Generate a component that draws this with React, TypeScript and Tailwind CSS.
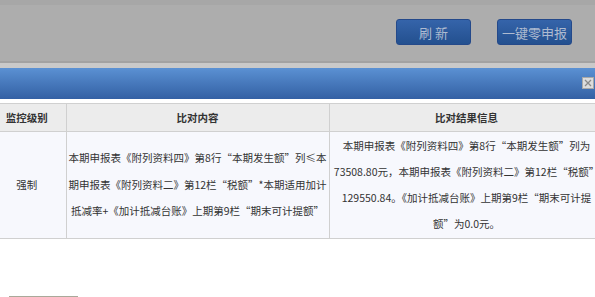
import React from "react";

const font = { fontFamily: '"Noto Sans CJK SC", "Noto Sans", sans-serif' };

export default function App() {
  return (
    <div className="w-[595px] h-[297px] overflow-hidden bg-white relative" style={font}>
      {/* top gray bar */}
      <div className="h-[5px] bg-[#a7a7a7]" />
      <div className="h-[56px] bg-[#adadad] flex items-start justify-end pt-[14px] pr-[23px] gap-[26px]">
        <button className="w-[75px] h-[26px] rounded-[3px] border border-[#24498a] bg-gradient-to-b from-[#3564aa] to-[#23508f] text-[13px] text-[#aebbd0] flex items-center justify-center leading-none">
          刷&nbsp;新
        </button>
        <button className="w-[75px] h-[26px] rounded-[3px] border border-[#24498a] bg-gradient-to-b from-[#3564aa] to-[#23508f] text-[13px] text-[#aebbd0] flex items-center justify-center leading-none whitespace-nowrap">
          一键零申报
        </button>
      </div>
      <div className="h-[2px] bg-[#a2a2a2]" />
      <div className="h-[5px] bg-[#c9c9c9]" />
      {/* blue dialog header */}
      <div className="h-[31px] bg-gradient-to-b from-[#5b91d3] to-[#3360a4] flex items-start justify-end pt-[9px] pr-[1px]">
        <div className="w-[12px] h-[12px] bg-[#dcdcdc] border border-[#a8a8a8] flex items-center justify-center">
          <svg width="8" height="8" viewBox="0 0 8 8">
            <path d="M1 1L7 7M7 1L1 7" stroke="#8a8a8a" strokeWidth="1.3" />
          </svg>
        </div>
      </div>
      <div className="h-[4px] bg-white" />
      {/* table */}
      <div className="overflow-hidden">
        <table className="ml-[-12px] border-collapse table-fixed text-[10.5px] text-[#333] w-[616px]">
          <colgroup>
            <col className="w-[78px]" />
            <col className="w-[263px]" />
            <col className="w-[275px]" />
          </colgroup>
          <thead>
            <tr className="h-[28px] bg-[#ececec]">
              <th className="border-y border-r border-[#d0d0d0] font-bold text-center">监控级别</th>
              <th className="border border-[#d0d0d0] font-bold text-center">比对内容</th>
              <th className="border border-[#d0d0d0] font-bold text-center">比对结果信息</th>
            </tr>
          </thead>
          <tbody>
            <tr className="h-[107px] bg-[#f7f8fd]">
              <td className="border-b border-r border-[#d0d0d0] text-center">强制</td>
              <td className="border border-[#d0d0d0] text-center leading-[26.5px] whitespace-nowrap">
                <div className="flex flex-col items-center">
                  <span>本期申报表《附列资料四》第8行“本期发生额”列≤本</span>
                  <span>期申报表《附列资料二》第12栏“税额”*本期适用加计</span>
                  <span>抵减率+《加计抵减台账》上期第9栏“期末可计提额”</span>
                </div>
              </td>
              <td className="border border-[#d0d0d0] text-center leading-[26px] whitespace-nowrap">
                <div className="flex flex-col items-center">
                  <span>本期申报表《附列资料四》第8行“本期发生额”列为</span>
                  <span>73508.80元，本期申报表《附列资料二》第12栏“税额”</span>
                  <span>129550.84。《加计抵减台账》上期第9栏“期末可计提</span>
                  <span>额”为0.0元。</span>
                </div>
              </td>
            </tr>
          </tbody>
        </table>
      </div>
      <div className="absolute left-[9px] top-[296px] w-[69px] h-[10px] border-t border-[#a9a99a] bg-[#e8e8e0]" />
    </div>
  );
}
